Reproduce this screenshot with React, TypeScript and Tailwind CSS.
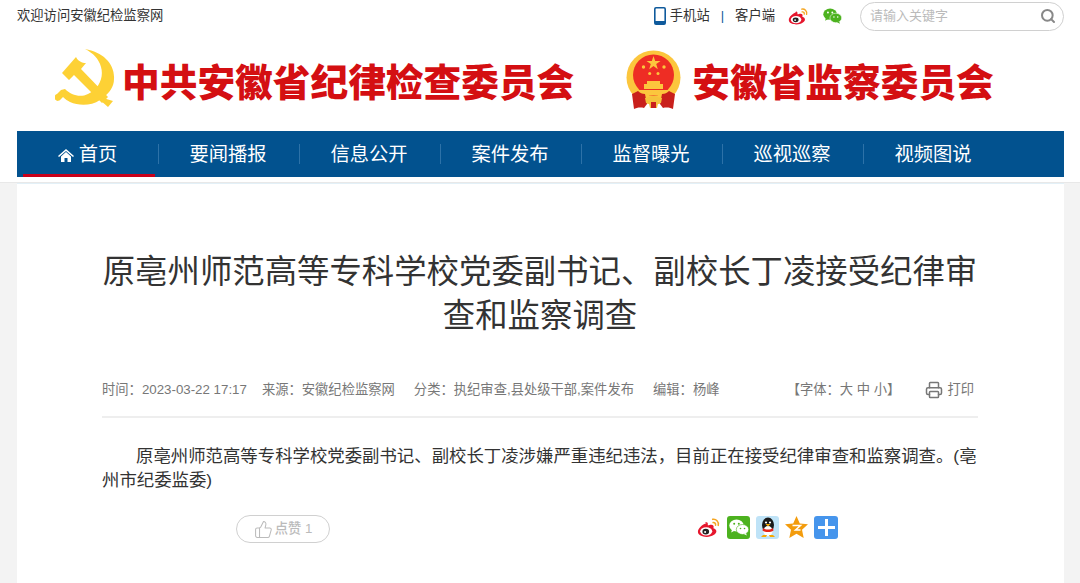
import React from "react";
import { Search, Printer, ThumbsUp } from "lucide-react";

const font = "font-['Liberation_Sans','Noto_Sans_CJK_SC',sans-serif]";

function Weibo({ size = 22 }: { size?: number }) {
  return (
    <svg width={size} height={size * 0.85} viewBox="0 0 26 22">
      <path d="M10.5 6.5C5.5 8 1 12.5 1 16c0 3.5 4.5 5.5 9.5 5.5 6 0 10.5-3 10.5-6 0-1.8-1.5-2.7-2.8-3.1-.6-.2-.3-.9-.2-1.4.3-1.6-.6-2.7-2.5-2.7-1.2 0-2.8.5-3.3.7-.4.2-.6-.1-.5-.6.2-1.5-.2-3-1.700-2.700-.5.1-1 .4-1.500.8z" fill="#e6162d" />
      <ellipse cx="10" cy="15.500" rx="6.500" ry="4.500" fill="#fff" />
      <ellipse cx="9.500" cy="15.800" rx="3.600" ry="3" fill="#222" />
      <circle cx="8.800" cy="16.200" r="1.100" fill="#fff" />
      <path d="M17 2.500c3.500-.8 7 2.500 6 6.500M17.500 6c1.500-.4 3 1 2.600 2.800" fill="none" stroke="#f5a623" strokeWidth="1.700" strokeLinecap="round" />
    </svg>
  );
}

function WechatBubbles({ w = 20, bg }: { w?: number; bg?: string }) {
  const c = bg ? "#fff" : "#4cb21f";
  const inner = bg ? "#4cb21f" : "#fff";
  return (
    <svg width={w} height={w * 0.85} viewBox="0 0 20 17">
      <ellipse cx="7.500" cy="6.500" rx="7.200" ry="6" fill={c} />
      <path d="M3 10.500l-.8 3 3.300-1.800z" fill={c} />
      <ellipse cx="13.500" cy="10.500" rx="6.200" ry="5" fill={c} stroke={inner} strokeWidth=".6" />
      <path d="M17 14l.8 2.500-3-1.500z" fill={c} />
      <circle cx="5.200" cy="4.800" r="1" fill={inner} />
      <circle cx="9.800" cy="4.800" r="1" fill={inner} />
      <circle cx="11.500" cy="9.500" r=".8" fill={inner} />
      <circle cx="15.500" cy="9.500" r=".8" fill={inner} />
    </svg>
  );
}

function Phone() {
  return (
    <svg width="12" height="18" viewBox="0 0 12 18" className="mr-[4px]">
      <rect x=".8" y=".8" width="10.400" height="16.400" rx="1.200" fill="none" stroke="#0f5a9c" strokeWidth="1.600" />
      <rect x="1" y="14" width="10" height="3" fill="#0f5a9c" />
    </svg>
  );
}

function HammerSickle() {
  return (
    <svg width="60" height="62" viewBox="0 0 60 62" className="shrink-0 mb-[4px]">
      <g fill="#fdd135">
        <path d="M30 0C48 3 60 15 59 30c0 8-5 14-11 19l10 3-5 6-8-7c-9 6-21 6-30 2-2-1-5-3-7-5l-2 2a3.500 3.500 0 1 1-4-5l4-4 4-1c6 6 15 9 23 5 11-5 16-17 13-27C44 10 38 4 30 0z" />
        <path d="M7 24L21 8c2 4 6 6 10 6l-5 6 27 28-6 6-28-28-5 5z" />
      </g>
    </svg>
  );
}

function Emblem() {
  return (
    <svg width="55" height="60" viewBox="-1 0 55 60" className="shrink-0 block">
      <circle cx="26.500" cy="27.500" r="27" fill="#fcc63d" />
      <circle cx="26.500" cy="25" r="20.500" fill="#ee2d24" />
      <path d="M26.500 6l1.700 5h5.300l-4.300 3.100 1.600 5.100-4.300-3.100-4.300 3.100 1.600-5.100-4.300-3.100h5.300z" fill="#fcc63d" />
      <g fill="#fcc63d">
        <circle cx="16.500" cy="17" r="1.700" />
        <circle cx="37" cy="17" r="1.700" />
        <circle cx="22.700" cy="23.500" r="1.500" />
        <circle cx="31" cy="23.500" r="1.500" />
        <path d="M20 31h13v3h3v5H17v-5h3z" />
        <path d="M11 40h31v5H11z" />
      </g>
      <path d="M5 44l6-3c2 2 4 3 7 3l2 10-3 4c-4-1-8 0-10 1zM48 44l-6-3c-2 2-4 3-7 3l-2 10 3 4c4-1 8 0 10 1z" fill="#c9201c" />
      <path d="M18 48c3 0 6-2 8.500-2s5.500 2 8.500 2l-1 5-3 .5-1 4.500h-7l-1-4.500-3-.5z" fill="#f5c23c" />
      <path d="M24 52h5v6h-5z" fill="#c9201c" />
    </svg>
  );
}

function Penguin() {
  return (
    <div className="w-[23px] h-[23px] rounded-[3px] bg-[#bfe3f7] flex items-center justify-center">
      <svg width="20" height="21" viewBox="0 0 20 21">
        <ellipse cx="10" cy="8" rx="6" ry="7.500" fill="#1a1a1a" />
        <ellipse cx="10" cy="14" rx="4.500" ry="5" fill="#fff" />
        <path d="M5 11c3 2 7 2 10 0l.5 2.500c-3 2-8 2-11 0z" fill="#e2231a" />
        <path d="M7.500 7h5l-2.500 2.500z" fill="#f6a800" />
        <circle cx="8" cy="5.500" r="1.100" fill="#fff" />
        <circle cx="12" cy="5.500" r="1.100" fill="#fff" />
        <path d="M5 18h4l-1 2H3zM11 18h4l2 2h-5z" fill="#f6a800" />
      </svg>
    </div>
  );
}

function QZone() {
  return (
    <svg width="23" height="22" viewBox="0 0 23 22">
      <path d="M11.500 0l3.300 7.400 8.200.9-6 5.500 1.700 8.200-7.200-4.200L4.300 22 6 13.800 0 8.300l8.200-.9z" fill="#f39c0d" />
      <path d="M7.500 9.500h8l-5 4.500h5" fill="none" stroke="#fff" strokeWidth="1.500" />
    </svg>
  );
}

function Plus() {
  return (
    <div className="w-[24px] h-[23px] rounded-[3px] bg-[#4695ec] flex items-center justify-center">
      <svg width="19" height="19" viewBox="0 0 19 19">
        <path d="M8 1h3v7h7v3h-7v7H8v-7H1V8h7z" fill="#fff" />
      </svg>
    </div>
  );
}

function HomeGlyph() {
  return (
    <svg width="16" height="13" viewBox="0 0 16 13" className="mr-[5px]">
      <path d="M8 0l8 7-1 1-7-6-7 6-1-1z" fill="#fff" />
      <path d="M3 7.500L8 3l5 4.500V13H9.500V9h-3v4H3z" fill="#fff" />
    </svg>
  );
}

const navItems = ["要闻播报", "信息公开", "案件发布", "监督曝光", "巡视巡察", "视频图说"];
const sep = "absolute -right-px top-[13px] h-[20px] w-px bg-[#2d72a8]";

export default function App() {
  return (
    <div className={`w-[1080px] h-[583px] overflow-hidden bg-[#f3f3f3] ${font} text-[#333]`}>
      <header className="bg-white border-b border-[#e8e8e8] h-[183px]">
        <div className="h-[32px] px-[16px] flex items-center justify-between">
          <span className="text-[13.300px] pl-px">欢迎访问安徽纪检监察网</span>
          <div className="flex items-center">
            <Phone />
            <span className="text-[13.300px]">手机站</span>
            <span className="text-[13px] mx-[11px] text-[#0f5a9c]">|</span>
            <span className="text-[13.300px]">客户端</span>
            <span className="ml-[13px] mr-[14px] flex"><Weibo size={21} /></span>
            <WechatBubbles w={19} />
            <div className="ml-[18px] w-[204px] h-[29px] rounded-full border border-[#d0d0d0] flex items-center justify-between pl-[9px] pr-[7px]">
              <span className="text-[13px] text-[#bbb]">请输入关键字</span>
              <Search size={16} strokeWidth={3} className="text-[#888]" />
            </div>
          </div>
        </div>
        <div className="h-[99px] pl-[55px] flex items-center">
          <HammerSickle />
          <span className="ml-[7px] mt-[5px] text-[37.700px] font-black text-[#d40f12] whitespace-nowrap leading-none">中共安徽省纪律检查委员会</span>
          <span className="ml-[52px] mb-[4px]"><Emblem /></span>
          <span className="ml-[11px] mt-[5px] text-[37.700px] font-black text-[#d40f12] whitespace-nowrap leading-none">安徽省监察委员会</span>
        </div>
        <nav className="ml-[17px] w-[1047px] h-[46px] bg-[#02528f] flex text-white text-[19.300px] items-stretch">
          <div className="relative w-[141px] flex items-center justify-center pt-[2px] pl-[6px] pr-[6px]">
            <HomeGlyph />
            首页
            <span className="absolute left-[6px] w-[132px] bottom-0 h-[3px] bg-[#c8001a]" />
            <span className={sep} />
          </div>
          {navItems.map((t, i) => (
            <div key={t} className="relative w-[141px] flex items-center justify-center pt-[2px] pr-px">
              {t}
              {i < 5 ? <span className={sep} /> : null}
            </div>
          ))}
        </nav>
      </header>
      <main className="ml-[17px] w-[1047px] bg-white h-[400px] pl-[85px] pr-[86px] border-t border-[#e3f0f7]">
        <h1 className="pt-[66px] text-[32.400px] leading-[44px] text-center font-normal text-[#333]">
          原亳州师范高等专科学校党委副书记、副校长丁凌接受纪律审查和监察调查
        </h1>
        <div className="mt-[39px] pt-px h-[24px] flex items-center text-[13.300px] text-[#777] whitespace-nowrap">
          <span>时间：2023-03-22 17:17</span>
          <span className="ml-[15px]">来源：安徽纪检监察网</span>
          <span className="ml-[19px]">分类：执纪审查,县处级干部,案件发布</span>
          <span className="ml-[19px]">编辑：杨峰</span>
          <span className="ml-auto">【字体：大 中 小】</span>
          <Printer size={18} className="ml-[25px] mr-[4px]" />
          <span className="mr-[4px]">打印</span>
        </div>
        <div className="mt-[15px] border-t-2 border-[#eee]" />
        <p className="mt-[26px] text-[17.400px] leading-[24px] indent-[34px] text-[#333]">
          原亳州师范高等专科学校党委副书记、副校长丁凌涉嫌严重违纪违法，目前正在接受纪律审查和监察调查。(亳州市纪委监委)
        </p>
        <div className="mt-[23px] flex items-center">
          <div className="ml-[134px] w-[94px] h-[28px] rounded-full border border-[#d0d0d0] flex items-center justify-center text-[13.300px] text-[#bbb] font-medium">
            <ThumbsUp size={19} strokeWidth={1.300} className="mr-[2px]" />
            点赞 1
          </div>
          <div className="ml-[367px] mb-[4px] flex items-center gap-[6px]">
            <Weibo size={24} />
            <div className="w-[23px] h-[23px] rounded-[3px] bg-[#4cb21f] flex items-center justify-center">
              <WechatBubbles w={20} bg="#4cb21f" />
            </div>
            <Penguin />
            <QZone />
            <Plus />
          </div>
        </div>
      </main>
    </div>
  );
}
